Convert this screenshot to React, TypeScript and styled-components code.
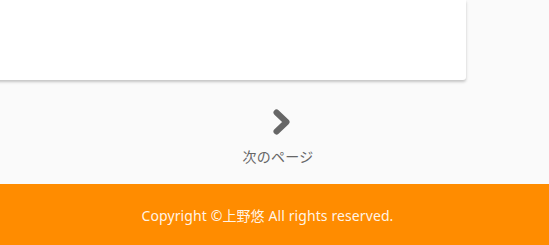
import styled, { createGlobalStyle } from "styled-components";

const GlobalStyle = createGlobalStyle`
  html, body {
    margin: 0;
    padding: 0;
    background: #fafafa;
    font-family: "Noto Sans", "Noto Sans CJK JP", sans-serif;
    overflow: hidden;
  }
`;

const Page = styled.div`
  width: 549px;
  height: 245px;
  display: flex;
  flex-direction: column;
`;

const Card = styled.div`
  height: 80px;
  width: 486px;
  margin-left: -20px;
  background: #fff;
  border-radius: 0 0 3px 3px;
  box-shadow: 0 2px 3px rgba(0, 0, 0, 0.22);
`;

const Pager = styled.a`
  display: flex;
  flex-direction: column;
  align-items: center;
  margin: 29px auto 0;
  padding-left: 7px;
  color: #666;
  text-decoration: none;
  cursor: pointer;
`;

const Chevron = styled.svg`
  display: block;
  margin-left: 8px;
`;

const PagerLabel = styled.span`
  margin-top: 12px;
  font-size: 14px;
  line-height: 20px;
  letter-spacing: 0.3px;
`;

const Footer = styled.footer`
  margin-top: auto;
  height: 61px;
  background: #ff8c00;
  display: flex;
  align-items: center;
  justify-content: center;
`;

const Copy = styled.p`
  margin: 0 14px 0 0;
  font-size: 14px;
  letter-spacing: 0.1px;
  color: rgba(255, 255, 255, 0.92);
`;

export default function App() {
  return (
    <Page>
      <GlobalStyle />
      <Card />
      <Pager>
        <Chevron width="17" height="26" viewBox="0 0 17 26">
          <polyline
            points="3.5,3.5 13.5,13 3.5,22.5"
            fill="none"
            stroke="#666"
            strokeWidth="6"
            strokeLinecap="round"
            strokeLinejoin="round"
          />
        </Chevron>
        <PagerLabel>次のページ</PagerLabel>
      </Pager>
      <Footer>
        <Copy>Copyright ©上野悠 All rights reserved.</Copy>
      </Footer>
    </Page>
  );
}
